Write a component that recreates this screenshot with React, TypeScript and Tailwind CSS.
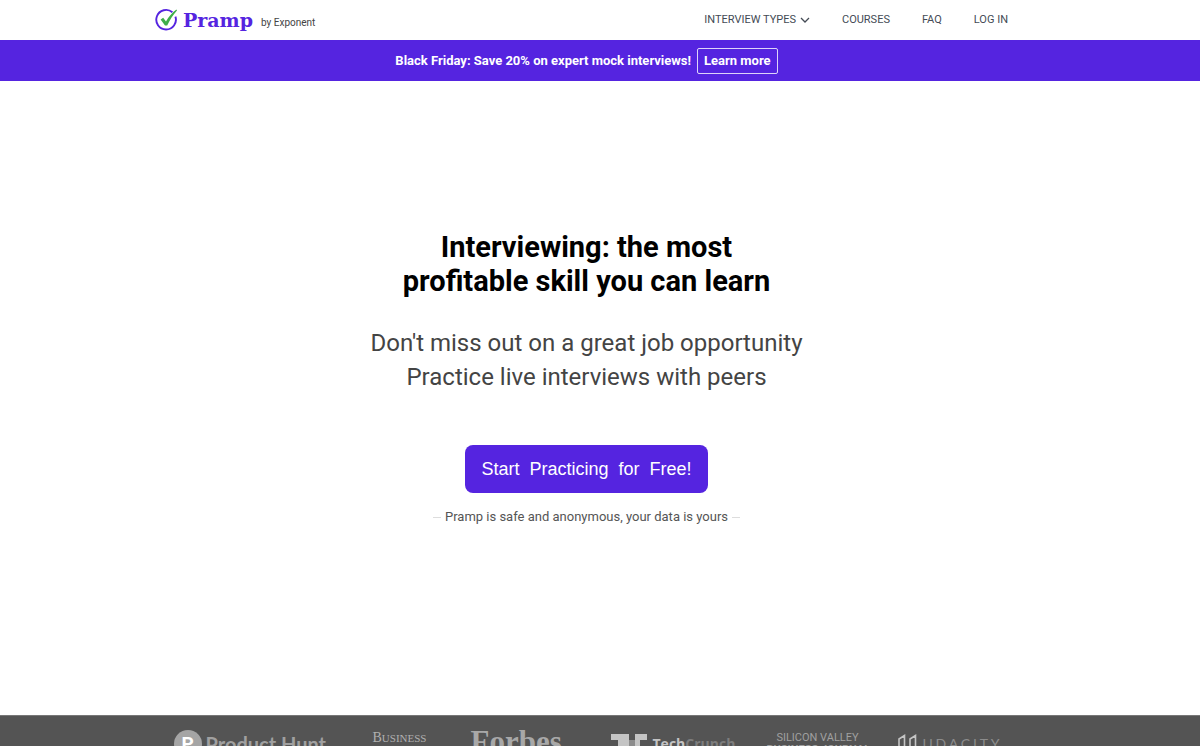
import React from 'react';

const navLinks = ['Courses', 'FAQ', 'Log in'];

const Logo: React.FC = () => (
    <a href="#" className="flex items-center text-[#5524e0]">
        <svg viewBox="0 0 24 24" className="w-6 h-6" fill="none" aria-hidden="true">
            <path d="M20.400 8.600A9.800 9.800 0 1 1 17.400 4.200" stroke="currentColor" strokeWidth="1.9" />
            <path d="M5.600 11.400l2.600-1.600 2.800 3.600C13.600 9 17 4.800 21.400 1.600L22 2.400C18 6.800 14.800 11.800 12.200 17.600H10z" fill="#3fae49" />
        </svg>
        <span className="ml-1 font-['DejaVu_Serif',serif] text-[19px] leading-6 font-bold">Pramp</span>
        <span className="ml-2 pt-1.5 text-[10px] leading-4 text-[#444]">by Exponent</span>
    </a>
);

const Header: React.FC = () => (
    <header className="h-10 pr-[27px]">
        <div className="mx-auto flex h-full max-w-[863px] items-center justify-between pr-2.5">
            <Logo />
            <nav className="flex items-center gap-8 text-[11px] leading-4 text-[#444b55] uppercase">
                <button type="button" className="flex items-center gap-1 uppercase">
                    Interview types
                    <svg viewBox="0 0 10 6" className="w-2.5" fill="none" stroke="currentColor" strokeWidth="1.3" aria-hidden="true">
                        <path d="M1 1l4 4 4-4" />
                    </svg>
                </button>
                {navLinks.map(link => (
                    <a key={link} href="#">{link}</a>
                ))}
            </nav>
        </div>
    </header>
);

const Banner: React.FC = () => (
    <div className="flex h-[41px] items-center justify-center gap-1.5 bg-[#5524e0] pr-[27px] text-[13px] leading-4 font-bold text-white">
        <span>Black Friday: Save 20% on expert mock interviews!</span>
        <a href="#" className="rounded-xs border border-white/80 px-1.5 py-1">Learn more</a>
    </div>
);

const Hero: React.FC = () => (
    <main className="flex flex-1 flex-col items-center pt-[149px] pr-[27px] text-center">
        <h1 className="text-[29px] leading-[34px] font-bold text-black">
            Interviewing: the most<br />profitable skill you can learn
        </h1>
        <p className="mt-7 text-[24px] leading-[34px] text-[#444]">
            Don't miss out on a great job opportunity<br />Practice live interviews with peers
        </p>
        <button type="button" className="mt-[51px] h-12 rounded-lg bg-[#5524e0] px-4 font-['Liberation_Sans',sans-serif] text-[18px] leading-6 whitespace-pre text-white">
            {'Start  Practicing  for  Free!'}
        </button>
        <div className="mt-4 flex items-center gap-1 text-[13px] leading-4 text-[#555]">
            <span className="w-2 h-px bg-[#ddd]" />
            <p>Pramp is safe and anonymous, your data is yours</p>
            <span className="w-2 h-px bg-[#ddd]" />
        </div>
    </main>
);

// Press strip, cut off by the fold
const Press: React.FC = () => (
    <footer className="mb-px h-[31px] overflow-hidden border-t border-[#777] bg-[#545454] pr-[27px] text-[#a0a0a0]">
        <div className="mx-auto flex max-w-[826px] items-start whitespace-nowrap">
            <div className="mt-3.5 mr-11 flex w-[155px] shrink-0 items-center gap-1">
                <span className="flex h-7 w-7 shrink-0 items-center justify-center rounded-full bg-[#a5a5a5] text-[19px] leading-6 font-bold text-white">P</span>
                <span className="font-['Lato',sans-serif] text-[20px] leading-6 font-bold">Product Hunt</span>
            </div>
            <div className="mt-3.5 mr-11 w-[54px] shrink-0 font-['Liberation_Serif',serif] text-[11px] leading-4 text-[#b0b0b0]">
                <span className="text-[14px]">B</span>USINESS<br />
                <span className="text-[14px]">I</span>NSIDER
            </div>
            <div className="mt-2.5 mr-12 w-[92px] shrink-0 font-['Liberation_Serif',serif] text-[31px] leading-8 font-bold text-[#a8a8a8]">Forbes</div>
            <div className="mt-[18px] mr-7 flex w-[128px] shrink-0 items-start gap-1.5">
                <svg viewBox="0 0 36 18" className="h-[18px] w-9 shrink-0" aria-hidden="true">
                    <path d="M0 0h18v18H7V6H0zM24 0h12v6h-7v6h7v6H24z" fill="#c4c4c4" />
                    <path d="M18 6h6v6h-6z" fill="#8c8c8c" />
                </svg>
                <span className="font-['Open_Sans',sans-serif] text-[14px] leading-5 font-bold">
                    <span className="text-[#c4c4c4]">Tech</span><span className="text-[#7d7d7d]">Crunch</span>
                </span>
            </div>
            <div className="mt-4 mr-7 w-[102px] shrink-0 text-center text-[11px] leading-3 uppercase">
                Silicon Valley<br /><b>Business Journal</b>
            </div>
            <div className="mt-[18px] flex shrink-0 items-start gap-1.5">
                <svg viewBox="0 0 20 20" className="h-5 w-5 shrink-0" fill="none" stroke="#c4c4c4" strokeWidth="1.6" aria-hidden="true">
                    <path d="M2 20V5L7.500 1.500V20M13 20V5L18.500 1.500V20" />
                </svg>
                <span className="font-['Lato',sans-serif] text-[14px] leading-5 tracking-[0.2em] text-[#8c8c8c]">UDACITY</span>
            </div>
        </div>
    </footer>
);

export default function App() {
    return (
        <div className="flex min-h-screen flex-col bg-white font-['Roboto',sans-serif]">
            <Header />
            <Banner />
            <Hero />
            <Press />
        </div>
    );
}
